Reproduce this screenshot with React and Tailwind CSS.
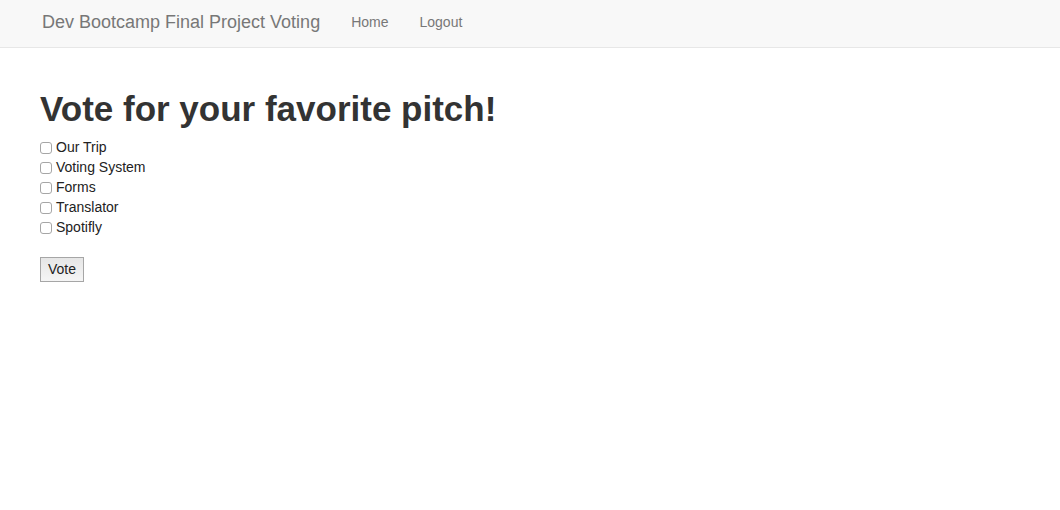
const pitches = ["Our Trip", "Voting System", "Forms", "Translator", "Spotifly"];

function Navbar() {
  return (
    <nav className="flex h-12 items-center gap-[31px] border-b border-[#e7e7e7] bg-[#f8f8f8] px-[42px] pb-1 text-sm leading-5 text-[#777777]">
      <a href="#" className="text-lg leading-5">Dev Bootcamp Final Project Voting</a>
      <a href="#">Home</a>
      <a href="#">Logout</a>
    </nav>
  );
}

export default function App() {
  return (
    <div className="min-h-screen bg-white font-['Liberation_Sans',Arial,sans-serif] text-sm leading-5 text-[#222222]">
      <Navbar />
      <main className="px-10 pt-10">
        <h1 className="text-[35px] leading-[42px] font-bold text-[#333333]">Vote for your favorite pitch!</h1>
        <form className="pt-[7px]" onSubmit={(event) => event.preventDefault()}>
          {pitches.map((pitch) => (
            <label key={pitch} className="flex w-fit items-center gap-1">
              <input
                type="checkbox"
                name="pitch"
                value={pitch}
                className="mt-0.5 size-3 appearance-none rounded-[3px] border border-[#a6a6a6] bg-white checked:bg-[#3b82f6]"
              />
              {pitch}
            </label>
          ))}
          <button type="submit" className="mt-5 h-[25px] border border-[#a6a6a6] bg-linear-to-b from-[#e6e6e6] to-[#f5f5f5] px-[7px] pb-0.5">
            Vote
          </button>
        </form>
      </main>
    </div>
  );
}
